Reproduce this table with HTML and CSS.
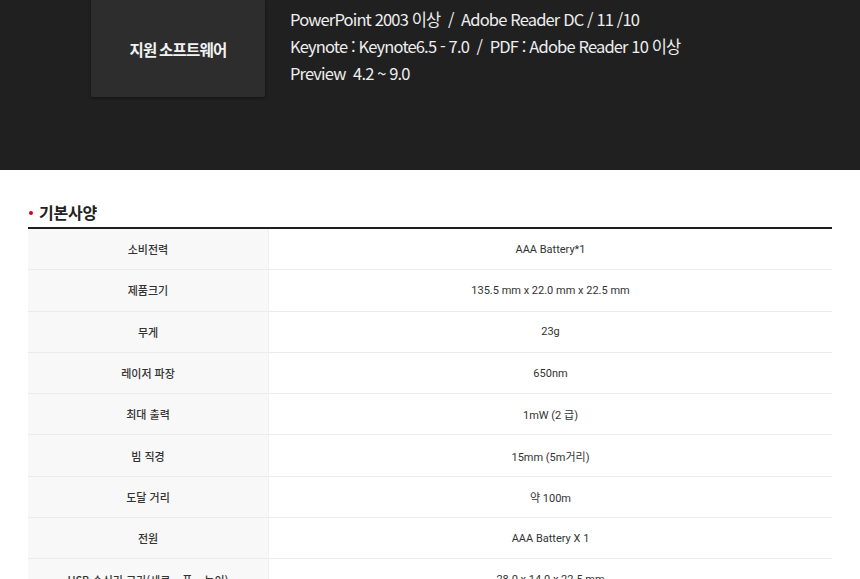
FILE: index.html
```html
<!DOCTYPE html>
<html lang="ko">
<head>
<meta charset="utf-8">
<link rel="stylesheet" href="styles.css">
</head>
<body>
<section class="hero">
  <div class="hero-inner">
    <div class="label-box">지원 소프트웨어</div>
    <div class="sw-list">
      <p>PowerPoint 2003 이상 &nbsp;/&nbsp; Adobe Reader DC / 11 /10</p>
      <p>Keynote : Keynote6.5 - 7.0 &nbsp;/&nbsp; PDF : Adobe Reader 10 이상</p>
      <p>Preview &nbsp;4.2 ~ 9.0</p>
    </div>
  </div>
</section>
<section class="spec">
  <h2 class="spec-title"><span class="dot"></span>기본사양</h2>
  <table class="spec-table">
    <tbody>
      <tr><th>소비전력</th><td>AAA Battery*1</td></tr>
      <tr><th>제품크기</th><td>135.5 mm x 22.0 mm x 22.5 mm</td></tr>
      <tr><th>무게</th><td>23g</td></tr>
      <tr><th>레이저 파장</th><td>650nm</td></tr>
      <tr><th>최대 출력</th><td>1mW (2 급)</td></tr>
      <tr><th>빔 직경</th><td>15mm (5m거리)</td></tr>
      <tr><th>도달 거리</th><td>약 100m</td></tr>
      <tr><th>전원</th><td>AAA Battery X 1</td></tr>
      <tr><th>USB 수신기 크기(세로 x 폭 x 높이)</th><td>28.0 x 14.0 x 22.5 mm</td></tr>
    </tbody>
  </table>
</section>
</body>
</html>
```
FILE: styles.css
```css
html, body {
  margin: 0;
  padding: 0;
  background: #ffffff;
}
body {
  font-family: "Noto Sans CJK KR", "Noto Sans", sans-serif;
  color: #333;
}
.hero {
  background: #202020;
  height: 170px;
}
.hero-inner {
  display: flex;
  align-items: flex-start;
  padding-left: 91px;
}
.label-box {
  width: 174px;
  height: 97px;
  background: #2d2d2d;
  box-shadow: 0 1px 3px rgba(0,0,0,0.5);
  border-radius: 0 0 2px 2px;
  display: flex;
  align-items: center;
  justify-content: center;
  color: #f2f2f2;
  font-size: 15.5px;
  font-weight: 700;
  letter-spacing: -0.8px;
  word-spacing: -1px;
}
.sw-list {
  padding-left: 25px;
  padding-top: 6px;
}
.sw-list p {
  margin: 0;
  color: #eeeeee;
  font-size: 16.5px;
  line-height: 27px;
  letter-spacing: -0.85px;
  font-weight: 400;
}
.spec {
  padding: 30px 28px 0 28px;
}
.spec-title {
  margin: 0;
  display: flex;
  align-items: center;
  font-size: 16px;
  font-weight: 700;
  color: #222;
  height: 24px;
  line-height: 24px;
  padding-bottom: 3px;
  padding-left: 1px;
  letter-spacing: -0.2px;
}
.dot {
  width: 4px;
  height: 4px;
  border-radius: 50%;
  background: #d0021b;
  margin-right: 6px;
  margin-top: 2px;
}
.spec-table {
  width: 804px;
  border-collapse: collapse;
  border-top: 2px solid #1e1e1e;
  font-size: 11px;
  color: #333;
}
.spec-table th,
.spec-table td {
  height: 40.3px;
  padding: 0;
  text-align: center;
  border-bottom: 1px solid #ebebeb;
  vertical-align: middle;
}
.spec-table th {
  width: 240px;
  background: #f8f8f8;
  font-weight: 500;
  border-right: 1px solid #f0f0f0;
  color: #333;
}
.spec-table td {
  font-family: Roboto, "Noto Sans CJK KR", sans-serif;
  font-weight: 400;
}
```
